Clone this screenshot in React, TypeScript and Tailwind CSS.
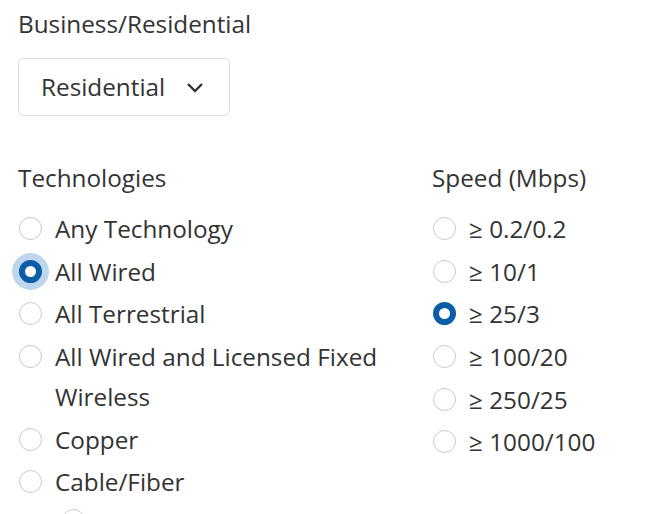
import { useState } from 'react'

const techs = [
  'Any Technology',
  'All Wired',
  'All Terrestrial',
  'All Wired and Licensed Fixed Wireless',
  'Copper',
  'Cable/Fiber',
]

const speeds = ['≥ 0.2/0.2', '≥ 10/1', '≥ 25/3', '≥ 100/20', '≥ 250/25', '≥ 1000/100']

function Radio({ label, checked, focused, onClick }: { label: string; checked: boolean; focused?: boolean; onClick: () => void }) {
  return (
    <label className="flex items-start gap-[13px] cursor-pointer" onClick={onClick}>
      {checked ? (
        <span
          className={
            'mt-[8px] ml-[1px] w-[23px] h-[23px] shrink-0 rounded-full border-[6.5px] border-[#0b5ea6] bg-white' +
            (focused ? ' shadow-[0_0_0_7px_#bfd7ed]' : '')
          }
        />
      ) : (
        <span className="mt-[8px] ml-[1px] w-[23px] h-[23px] shrink-0 rounded-full border-[1.5px] border-[#c9c9c9] bg-white" />
      )}
      <span className="leading-[40px]">{label}</span>
    </label>
  )
}

export default function App() {
  const [tech, setTech] = useState('All Wired')
  const [speed, setSpeed] = useState('≥ 25/3')

  return (
    <div className="h-[514px] overflow-hidden bg-white px-[18px] pt-[4px] font-['Open_Sans',sans-serif] text-[24.3px] text-[#333]">
      <div className="leading-[40px]">Business/Residential</div>

      <button className="mt-[14px] h-[58px] w-[212px] flex items-center gap-[21px] pl-[22px] rounded-[6px] border border-[#dcdcdc] bg-white text-[#333]">
        <span>Residential</span>
        <svg width="18" height="11" viewBox="0 0 18 11" fill="none">
          <polyline points="2,2 9,9 16,2" stroke="#333" strokeWidth="2.4" />
        </svg>
      </button>

      <div className="mt-[42px] grid grid-cols-[414px_1fr]">
        <div>
          <div className="leading-[40px]">Technologies</div>
          <div className="mt-[11px] flex flex-col gap-[2.7px] pr-[40px]">
            {techs.map((t) => (
              <Radio key={t} label={t} checked={tech === t} focused onClick={() => setTech(t)} />
            ))}
            {/* nested sub-option, only its radio peeks into view */}
            <div className="ml-[43px] mt-[4px] flex">
              <span className="ml-[1px] w-[23px] h-[23px] rounded-full border-[1.5px] border-[#c9c9c9] bg-white" />
            </div>
          </div>
        </div>
        <div>
          <div className="leading-[40px]">Speed (Mbps)</div>
          <div className="mt-[11px] flex flex-col gap-[2.7px]">
            {speeds.map((s) => (
              <Radio key={s} label={s} checked={speed === s} onClick={() => setSpeed(s)} />
            ))}
          </div>
        </div>
      </div>
    </div>
  )
}
